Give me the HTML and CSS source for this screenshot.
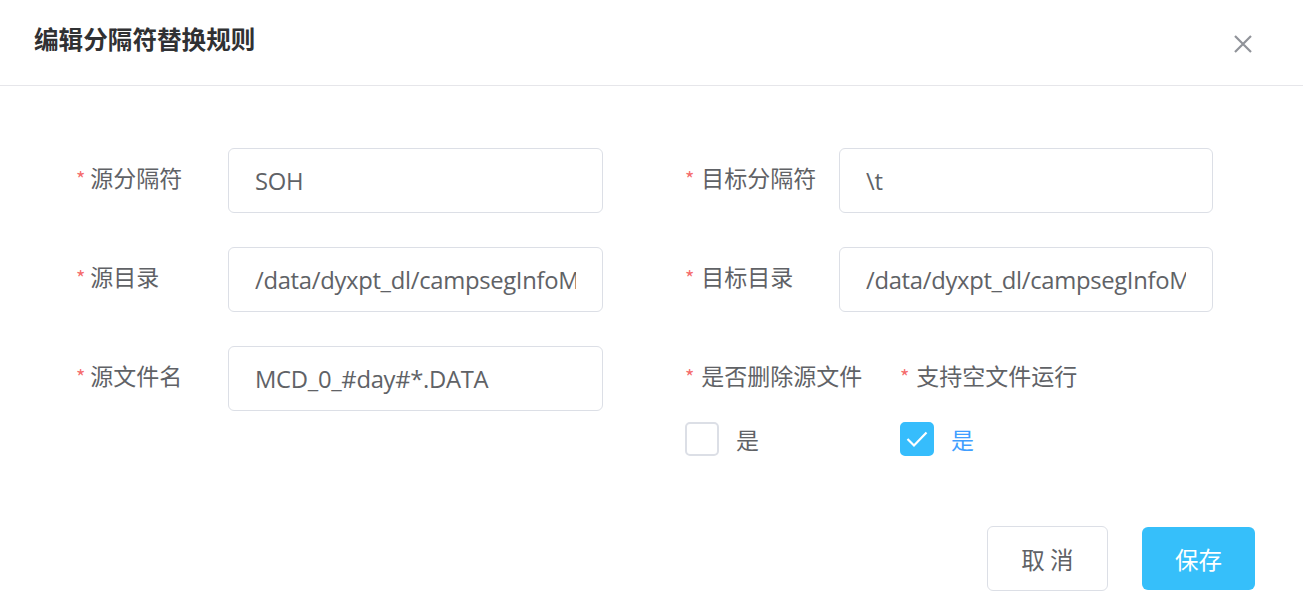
FILE: index.html
```html
<!DOCTYPE html>
<html lang="zh-CN">
<head>
<meta charset="utf-8">
<title>编辑分隔符替换规则</title>
<link rel="stylesheet" href="styles.css">
</head>
<body>
<div class="dialog">
  <div class="header">
    <div class="title">编辑分隔符替换规则</div>
    <button class="close" aria-label="关闭">
      <svg width="20" height="20" viewBox="0 0 20 20"><path d="M2 2 L18 18 M18 2 L2 18" stroke="#909399" stroke-width="2.2" fill="none"/></svg>
    </button>
  </div>
  <div class="body">
    <div class="form">
      <div class="item">
        <label class="label left"><span class="req">*</span>源分隔符</label>
        <div class="input"><span class="val">SOH</span></div>
      </div>
      <div class="item">
        <label class="label right"><span class="req">*</span>目标分隔符</label>
        <div class="input"><span class="val">\t</span></div>
      </div>
      <div class="item">
        <label class="label left"><span class="req">*</span>源目录</label>
        <div class="input"><span class="val">/data/dyxpt_dl/campsegInfoM</span></div>
      </div>
      <div class="item">
        <label class="label right"><span class="req">*</span>目标目录</label>
        <div class="input"><span class="val">/data/dyxpt_dl/campsegInfoM</span></div>
      </div>
      <div class="item">
        <label class="label left"><span class="req">*</span>源文件名</label>
        <div class="input"><span class="val">MCD_0_#day#*.DATA</span></div>
      </div>
      <div class="checks">
        <div class="check-item first">
          <div class="check-label"><span class="req">*</span>是否删除源文件</div>
          <div class="checkbox"><span class="box"></span><span class="ctext">是</span></div>
        </div>
        <div class="check-item">
          <div class="check-label"><span class="req">*</span>支持空文件运行</div>
          <div class="checkbox checked"><span class="box"><svg width="24" height="20" viewBox="0 0 24 20"><path d="M2.5 10 L9 16.5 L21.5 3.5" stroke="#fff" stroke-width="2.2" fill="none"/></svg></span><span class="ctext">是</span></div>
        </div>
      </div>
    </div>
  </div>
  <div class="footer">
    <button class="btn cancel">取 消</button>
    <button class="btn save">保存</button>
  </div>
</div>
</body>
</html>
```
FILE: styles.css
```css
* { box-sizing: border-box; }
html, body { margin: 0; padding: 0; background: #fff; }
body {
  font-family: "Open Sans", "Noto Sans CJK SC", sans-serif;
  color: #606266;
  width: 1303px;
  height: 602px;
  overflow: hidden;
}
.dialog { width: 1303px; }
.header {
  height: 86px;
  border-bottom: 1px solid #e6e6ea;
  display: flex;
  align-items: center;
  justify-content: space-between;
  padding: 0 50px 10px 34px;
}
.title {
  font-family: "Noto Sans CJK SC", sans-serif;
  font-weight: 700;
  font-size: 24.6px;
  color: #303133;
  line-height: 32px;
}
.close {
  border: 0;
  background: none;
  padding: 0;
  width: 20px;
  height: 20px;
  display: flex;
  margin-top: 12px;
}
.body { padding: 62px 0 0 76px; }
.form {
  display: grid;
  grid-template-columns: 527px 528px;
  column-gap: 82px;
  row-gap: 34px;
}
.item { display: flex; align-items: center; height: 65px; }
.label {
  font-family: "Noto Sans CJK SC", sans-serif;
  font-size: 23px;
  color: #606266;
  line-height: 30px;
  margin-top: -5px;
}
.label.left { width: 152px; }
.label.right { width: 154px; }
.req { color: #f56c6c; margin-right: 5px; font-size: 20px; }
.label.right .req, .check-label .req { margin-right: 7px; }
.input {
  width: 375px;
  height: 65px;
  border: 1px solid #dcdfe6;
  border-radius: 6px;
  padding: 0 26px;
  display: flex;
  align-items: center;
}
.right + .input { width: 374px; }
.val {
  display: block;
  width: 100%;
  overflow: hidden;
  white-space: nowrap;
  font-family: "Open Sans", "Noto Sans CJK SC", sans-serif;
  font-size: 23.8px;
  letter-spacing: -0.3px;
  line-height: 34px;
  color: #606266;
}
.checks { display: flex; }
.check-item { display: flex; flex-direction: column; }
.check-item.first { width: 215px; }
.check-label {
  font-family: "Noto Sans CJK SC", sans-serif;
  font-size: 23px;
  line-height: 30px;
  height: 65px;
  padding-top: 14px;
  color: #606266;
}
.checkbox {
  display: flex;
  align-items: center;
  margin-top: 11px;
  font-family: "Noto Sans CJK SC", sans-serif;
  font-size: 23px;
}
.box {
  width: 34px;
  height: 34px;
  border: 2px solid #dcdfe6;
  border-radius: 5px;
  display: flex;
  align-items: center;
  justify-content: center;
  margin-right: 17px;
}
.checked .box { background: #36bdfc; border-color: #36bdfc; }
.checked .ctext { color: #409eff; }
.footer {
  display: flex;
  justify-content: flex-end;
  gap: 34px;
  padding: 70px 48px 0 0;
}
.btn {
  font-family: "Noto Sans CJK SC", sans-serif;
  font-size: 23.5px;
  border-radius: 6px;
  cursor: pointer;
}
.cancel {
  width: 121px;
  height: 65px;
  background: #fff;
  border: 1px solid #dcdfe6;
  color: #606266;
}
.save {
  width: 113px;
  height: 63px;
  margin-top: 1px;
  background: #36bffa;
  border: 0;
  color: #fff;
}
```
